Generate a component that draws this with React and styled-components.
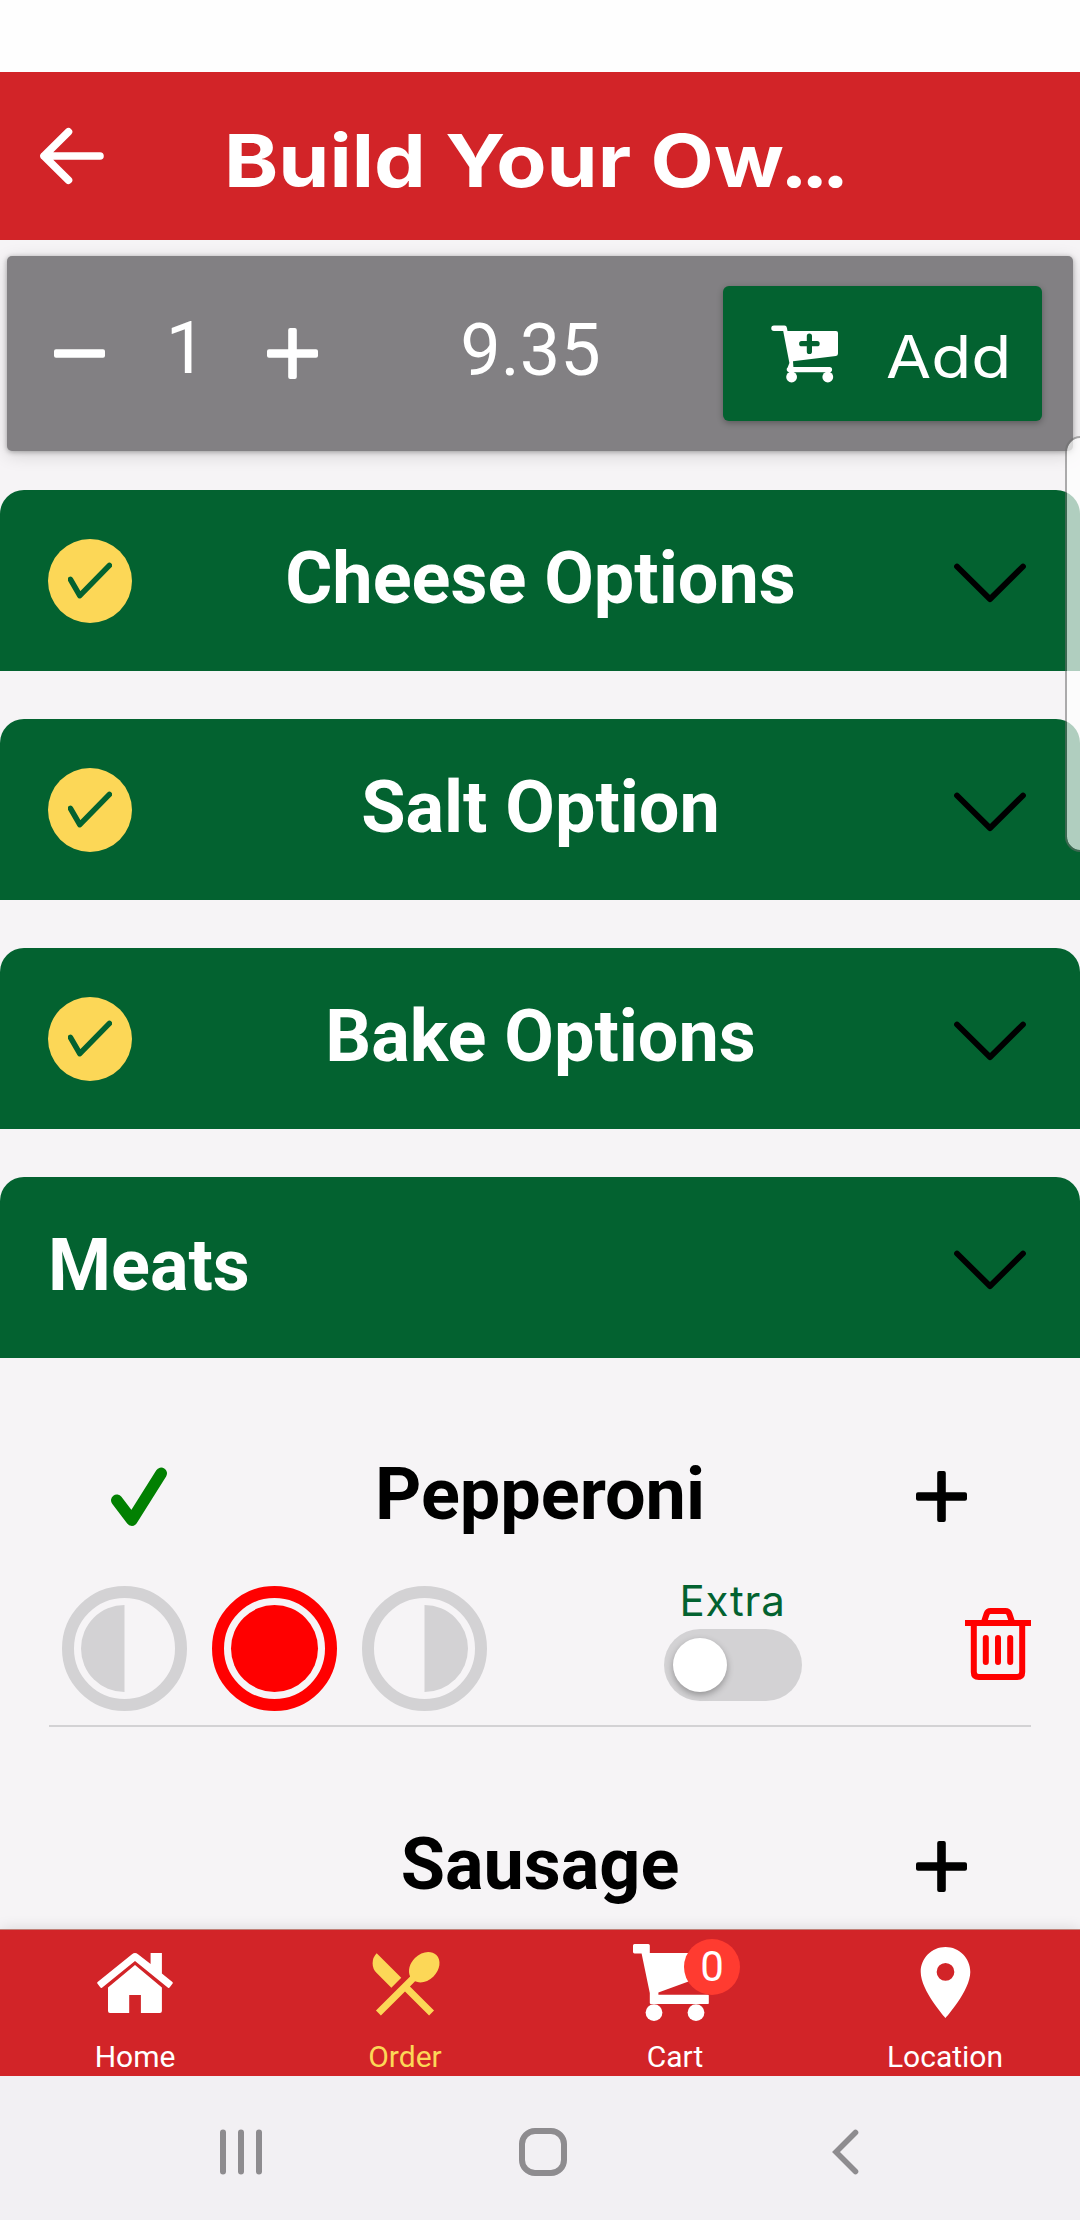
import { useState } from "react"
import styled, { createGlobalStyle } from "styled-components"
import { MdLocalDining, MdLocationOn } from "react-icons/md"


const sections = [
    { name: "Cheese Options", done: true },
    { name: "Salt Option", done: true },
    { name: "Bake Options", done: true },
    { name: "Meats", done: false },
]

function BackIcon() {
    return (
        <svg width="66" height="58" viewBox="0 0 66 58" fill="none" stroke="#fff" strokeWidth="7.6" strokeLinecap="round" strokeLinejoin="round">
            <path d="M61 29H5M29.5 4.8L5 29l24.5 24.2" />
        </svg>
    )
}

function PlusIcon({ color }) {
    return (
        <svg width="51" height="51" viewBox="0 0 51 51" fill={color}>
            <rect x="0" y="21.2" width="51" height="8.6" rx="2" />
            <rect x="21.2" y="0" width="8.6" height="51" rx="2" />
        </svg>
    )
}

function MinusIcon() {
    return (
        <svg width="51" height="51" viewBox="0 0 51 51" fill="#fff">
            <rect x="0" y="21.2" width="51" height="8.6" rx="2" />
        </svg>
    )
}

function CartAddIcon() {
    return (
        <svg width="67" height="58" viewBox="0 0 67 58" fill="#fff">
            <path d="M3 0.5h10.5q2 0 2.4 2.2l.6 3.2H65q2 0 2 2v20.6q0 2.2-2 2.4L22 36.2l.4 5.8H58.5a2.6 2.6 0 0 1 0 5.2H18a2.6 2.6 0 0 1-1.4-4.6L18.4 38 12.2 6H3a2.7 2.7 0 0 1 0-5.5z" />
            <circle cx="20.6" cy="52" r="5.4" />
            <circle cx="56.8" cy="52" r="5.4" />
            <path d="M38.4 11v15.4M30.7 18.7h15.4" stroke="#036230" strokeWidth="5.2" strokeLinecap="round" />
        </svg>
    )
}

function CheckIcon() {
    return (
        <svg width="44" height="38" viewBox="0 0 44 38" fill="none" stroke="#036230" strokeWidth="5.6" strokeLinecap="round" strokeLinejoin="round">
            <path d="M2.4 17.4l9.4 16.2L41.400 3.400" />
        </svg>
    )
}

function ChevronIcon() {
    return (
        <svg width="72" height="40" viewBox="0 0 72 40" fill="none" stroke="#000" strokeWidth="5.8" strokeLinecap="round" strokeLinejoin="round">
            <path d="M3 3.5l33 32.6L69 3.5" />
        </svg>
    )
}

function SelectedIcon() {
    return (
        <svg width="58" height="60" viewBox="0 0 58 60" fill="none" stroke="#028002" strokeWidth="11.6" strokeLinecap="round" strokeLinejoin="round">
            <path d="M6.8 33.3l15 19.8L51.2 6.3" />
        </svg>
    )
}

function TrashIcon() {
    return (
        <svg width="66" height="72" viewBox="0 0 66 72" fill="none" stroke="#f00" strokeWidth="6">
            <path d="M3 15h60" strokeLinecap="square" />
            <path d="M8.8 15v49q0 5 5 5h38.4q5 0 5-5V15" />
            <path d="M19 14l2.6-8q1-3 4-3h14.8q3 0 4 3l2.600 8" />
            <path d="M20.8 30v24M33 30v24M45.200 30v24" strokeLinecap="round" />
        </svg>
    )
}

function HomeIcon() {
    return (
        <svg width="76" height="60" viewBox="0 0 76 60" fill="#fff">
            <path d="M.6 29L35 1.2q3-2.4 6 0L53.6 11V0h11.3v20.6L75.4 29q.8.8.2 1.6l-3 4q-.8.8-1.6.2L38 8 5 34.8q-.8.6-1.6-.2l-3-4q-.6-.8.2-1.6z" />
            <path d="M38 12l26.9 22.4V58q0 2-2 2h-19V42H32.2v18H13q-2 0-2-2V34.4z" />
        </svg>
    )
}

function CartIcon() {
    return (
        <svg width="84" height="77" viewBox="0 0 84 77" fill="#fff">
            <path d="M1.5 0h13.8q1.5 0 1.5 1.5V9H76v21L25.4 48.4v2.4H75q.8 0 .8.8v7.6q0 .8-.8.8H17.8q-1 0-1-1V49L8.6 9.4H1.5Q0 9.4 0 8V1.5Q0 0 1.5 0z" />
            <circle cx="21" cy="68.6" r="8.4" />
            <circle cx="63" cy="68.6" r="8.4" />
        </svg>
    )
}


function Portion({ side, active, onClick }) {
    return (
        <PortionButton $active={active} onClick={onClick}>
            <PortionFill $side={side} $active={active} />
        </PortionButton>
    )
}

function OptionSection({ name, done }) {
    return (
        <SectionHeader>
            <SectionSide>
                {done && <CheckCircle><CheckIcon /></CheckCircle>}
            </SectionSide>
            <SectionTitle $left={!done}>{name}</SectionTitle>
            <ChevronIcon />
        </SectionHeader>
    )
}

function Topping({ name, selected, children }) {
    return (
        <ToppingContainer>
            <ToppingRow>
                <ToppingMark>{selected && <SelectedIcon />}</ToppingMark>
                <ToppingName>{name}</ToppingName>
                <PlusIcon color="#000" />
            </ToppingRow>
            {children}
        </ToppingContainer>
    )
}


export default function App() {
    const [portion, setPortion] = useState("whole")

    return (
        <PageContainer>
            <GlobalStyle />
            <StatusBar />
            <Header>
                <BackIcon />
                <HeaderTitle>Build Your Ow<Dots>...</Dots></HeaderTitle>
            </Header>

            <Content>
                <OrderCard>
                    <MinusIcon />
                    <Quantity>1</Quantity>
                    <PlusIcon color="#fff" />
                    <Price>9.35</Price>
                    <AddButton>
                        <CartAddIcon />
                        <AddLabel>Add</AddLabel>
                    </AddButton>
                </OrderCard>

                <SectionList>
                    {sections.map((section) => (
                        <OptionSection key={section.name} name={section.name} done={section.done} />
                    ))}
                </SectionList>

                <Topping name="Pepperoni" selected>
                    <ToppingOptions>
                        {["left", "whole", "right"].map((side) => (
                            <Portion key={side} side={side} active={portion === side} onClick={() => setPortion(side)} />
                        ))}
                        <ExtraContainer>
                            <ExtraLabel>Extra</ExtraLabel>
                            <Switch><SwitchThumb /></Switch>
                        </ExtraContainer>
                        <RemoveButton><TrashIcon /></RemoveButton>
                    </ToppingOptions>
                </Topping>
                <Topping name="Sausage" />
            </Content>

            <TabBar>
                <Tab>
                    <TabIcon><HomeIcon /></TabIcon>
                    Home
                </Tab>
                <Tab $active>
                    <TabIcon><MdLocalDining size={84} /></TabIcon>
                    Order
                </Tab>
                <Tab>
                    <TabIcon>
                        <CartIcon />
                        <Badge>0</Badge>
                    </TabIcon>
                    Cart
                </Tab>
                <Tab>
                    <TabIcon><MdLocationOn size={85} /></TabIcon>
                    Location
                </Tab>
            </TabBar>

            <SystemBar>
                <svg width="42" height="46" viewBox="0 0 42 46" stroke="#8e8c8f" strokeWidth="6" strokeLinecap="round">
                    <path d="M3 3.5v39M21 3.5v39M39 3.5v39" />
                </svg>
                <HomeKey />
                <svg width="27" height="46" viewBox="0 0 27 46" fill="none" stroke="#8e8c8f" strokeWidth="5.6" strokeLinecap="round">
                    <path d="M23.5 3.5L4 23l19.5 19.5" />
                </svg>
            </SystemBar>
            <EdgeHandle />
        </PageContainer>
    )
}

const GlobalStyle = createGlobalStyle`
    body {
        margin: 0;
    }
    * {
        box-sizing: border-box;
    }
    svg {
        display: block;
        flex-shrink: 0;
    }
    button {
        border: none;
        padding: 0;
        background: none;
    }
`
const PageContainer = styled.div`
    position: relative;
    width: 1080px;
    height: 2220px;
    display: flex;
    flex-direction: column;
    overflow: hidden;
    background: #f6f4f6;
    font-family: Roboto, sans-serif;
`
const StatusBar = styled.div`
    height: 72px;
    background: #fefefe;
`
const Header = styled.header`
    height: 168px;
    display: flex;
    align-items: center;
    padding-left: 39px;
    background: #d22428;
`
const HeaderTitle = styled.h1`
    margin: 10px 0 0 119px;
    font-family: Inter, sans-serif;
    font-size: 73px;
    font-weight: 700;
    line-height: 90px;
    white-space: nowrap;
    transform: scaleX(1.125);
    transform-origin: left;
    color: #fff;
`
const Dots = styled.span`
    margin-left: -3px;
    letter-spacing: -6px;
`
const Content = styled.main`
    flex: 1;
    min-height: 0;
    overflow: hidden;
    padding-top: 16px;
`
const OrderCard = styled.div`
    height: 195px;
    margin: 0 7px;
    padding: 0 30px 0 47px;
    display: flex;
    align-items: center;
    border-radius: 5px;
    background: #828083;
    box-shadow: 0 4px 18px rgba(0, 0, 0, 0.14), 0 1px 5px rgba(0, 0, 0, 0.3);
`
const Quantity = styled.span`
    width: 162px;
    margin-top: -10px;
    text-align: center;
    font-size: 72px;
    line-height: 84px;
    color: #fff;
`
const Price = styled.span`
    width: 405px;
    margin-top: -6px;
    padding-left: 20px;
    text-align: center;
    font-size: 72px;
    line-height: 84px;
    color: #fff;
`
const AddButton = styled.button`
    width: 319px;
    height: 135px;
    display: flex;
    align-items: center;
    padding-left: 48px;
    gap: 48px;
    border-radius: 6px;
    background: #036230;
    box-shadow: 0 2px 6px rgba(0, 0, 0, 0.3);
    color: #fff;
`
const AddLabel = styled.span`
    margin-top: 6px;
    font-family: Inter, sans-serif;
    font-size: 59px;
    transform: scaleX(1.11);
    transform-origin: left;
`
const SectionList = styled.div`
    display: flex;
    flex-direction: column;
    gap: 48px;
    margin-top: 39px;
`
const SectionHeader = styled.div`
    height: 181px;
    display: flex;
    align-items: center;
    justify-content: space-between;
    padding: 0 54px 0 48px;
    border-radius: 24px 24px 0 0;
    background: #036230;
    > svg {
        margin-top: 4px;
    }
`
const SectionSide = styled.div`
    display: flex;
`
const CheckCircle = styled.div`
    width: 84px;
    height: 84px;
    display: flex;
    align-items: center;
    justify-content: center;
    border-radius: 50%;
    background: #fcd757;
`
const SectionTitle = styled.h2`
    flex: 1;
    margin: -4px 0 0;
    padding-right: ${props => props.$left ? "0" : "5px"};
    text-align: ${props => props.$left ? "left" : "center"};
    font-size: 72px;
    font-weight: 700;
    line-height: 84px;
    color: #fff;
`
const ToppingContainer = styled.div`
    height: 369px;
    margin: 0 49px 1px;
    padding-top: 91px;
    border-bottom: 2px solid #d3d2d4;
`
const ToppingRow = styled.div`
    height: 95px;
    display: flex;
    align-items: center;
    padding: 0 64px 0 61px;
`
const ToppingMark = styled.div`
    width: 54px;
`
const ToppingName = styled.h3`
    flex: 1;
    margin: -4px 0 0;
    text-align: center;
    font-size: 72px;
    font-weight: 700;
    line-height: 84px;
`
const ToppingOptions = styled.div`
    height: 125px;
    display: flex;
    align-items: center;
    margin-top: 42px;
    padding-left: 13px;
    gap: 25px;
`
const PortionButton = styled.button`
    width: 125px;
    height: 125px;
    display: flex;
    align-items: center;
    justify-content: center;
    border: 12.5px solid ${props => props.$active ? "#f00" : "#d3d2d4"};
    border-radius: 50%;
`
const PortionFill = styled.div`
    width: 87px;
    height: 87px;
    flex-shrink: 0;
    border-radius: 50%;
    background: ${props => props.$active ? "#f00" : "#d3d2d4"};
    clip-path: ${props => props.$side === "left" ? "inset(0 50% 0 0)" : props.$side === "right" ? "inset(0 0 0 50%)" : "none"};
`
const ExtraContainer = styled.div`
    flex: 1;
    display: flex;
    flex-direction: column;
    align-items: center;
    padding-left: 13px;
    margin-top: -21px;
`
const ExtraLabel = styled.span`
    font-family: Inter, sans-serif;
    font-size: 42px;
    line-height: 52px;
    letter-spacing: 0.8px;
    margin-bottom: 2px;
    color: #036230;
`
const Switch = styled.div`
    width: 138px;
    height: 72px;
    padding: 9px;
    border-radius: 36px;
    background: #d3d2d4;
`
const SwitchThumb = styled.div`
    width: 54px;
    height: 54px;
    border-radius: 50%;
    background: #fff;
    box-shadow: 0 3px 7px rgba(0, 0, 0, 0.3);
`
const RemoveButton = styled.button`
    margin-top: -9px;
`
const TabBar = styled.nav`
    height: 147px;
    display: flex;
    position: relative;
    border-top: 1px solid #c08078;
    background: #d22428;
    box-shadow: 0 0 14px rgba(0, 0, 0, 0.12);
`
const Tab = styled.div`
    flex: 1;
    display: flex;
    flex-direction: column;
    align-items: center;
    font-size: 30px;
    line-height: 36px;
    color: ${props => props.$active ? "#fcd757" : "#fff"};
`
const TabIcon = styled.div`
    position: relative;
    height: 105px;
    margin-bottom: 4px;
    display: flex;
    align-items: center;
`
const Badge = styled.span`
    position: absolute;
    top: 9px;
    left: 51px;
    width: 56px;
    height: 56px;
    border-radius: 50%;
    text-align: center;
    font-size: 42px;
    line-height: 56px;
    background: #ff3b30;
    color: #fff;
`
const SystemBar = styled.div`
    height: 144px;
    position: relative;
    display: flex;
    align-items: center;
    justify-content: space-between;
    padding: 8px 221px 0 220px;
    background: #f2f0f3;
`
const HomeKey = styled.div`
    width: 48px;
    height: 48px;
    margin-right: 8px;
    border: 6px solid #8e8c8f;
    border-radius: 16px;
`
const EdgeHandle = styled.div`
    position: absolute;
    top: 436px;
    right: -16px;
    width: 31px;
    height: 416px;
    border: 2px solid rgba(110, 110, 110, 0.55);
    border-radius: 18px;
    background: rgba(255, 255, 255, 0.69);
    background-clip: padding-box;
`
